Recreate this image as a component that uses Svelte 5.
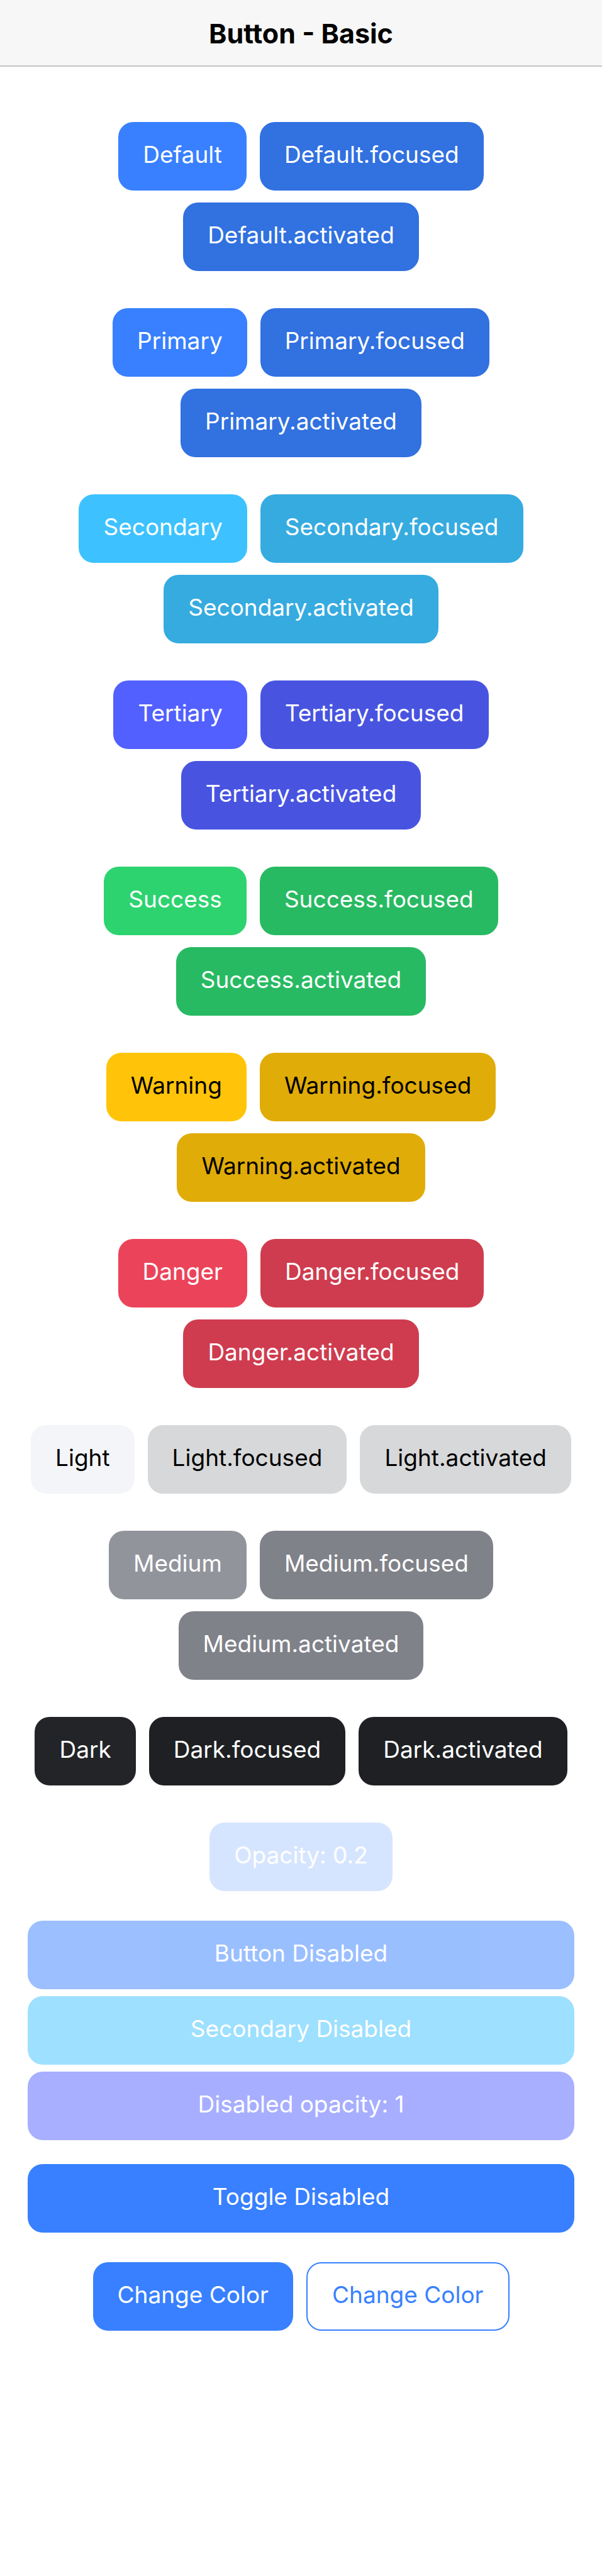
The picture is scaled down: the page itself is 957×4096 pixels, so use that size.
<script>
  const groups = ['Default', 'Primary', 'Secondary', 'Tertiary', 'Success', 'Warning', 'Danger', 'Light', 'Medium', 'Dark'];
  const palette = ['primary', 'secondary', 'tertiary', 'success', 'warning', 'danger', 'light', 'medium', 'dark'];

  let toggled = $state(false);
  let index = $state(0);

  function nextColor() {
    index = (index + 1) % palette.length;
  }
</script>

<div class="page">
  <header>
    <h1>Button - Basic</h1>
  </header>

  <main>
    {#each groups as name}
      {@const color = name === 'Default' ? 'primary' : name.toLowerCase()}
      <div class="group">
        <button type="button" class={color}>{name}</button>
        <button type="button" class="{color} shade">{name}.focused</button>
        <button type="button" class="{color} shade">{name}.activated</button>
      </div>
    {/each}

    <div class="group">
      <button type="button" class="primary faint">Opacity: 0.2</button>
    </div>

    <div class="stack">
      <button type="button" class="primary" disabled>Button Disabled</button>
      <button type="button" class="secondary" disabled>Secondary Disabled</button>
      <button type="button" class="tertiary" disabled>Disabled opacity: 1</button>
    </div>

    <div class="stack toggle">
      <button type="button" class="primary" aria-pressed={toggled} onclick={() => (toggled = !toggled)}>Toggle Disabled</button>
    </div>

    <div class="group">
      <button type="button" class={palette[index]} onclick={nextColor}>Change Color</button>
      <button type="button" class="{palette[index]} outline" onclick={nextColor}>Change Color</button>
    </div>
  </main>
</div>

<style>
  :global(body) {
    margin: 0;
    background: #fff;
  }

  .page {
    min-height: 100vh;
    font-family: Inter, "Liberation Sans", sans-serif;
    color: #000;
  }

  header {
    display: flex;
    align-items: center;
    justify-content: center;
    height: 104px;
    background: #f7f7f7;
    border-bottom: 2px solid #c4c4c4;
  }

  h1 {
    margin: 0;
    padding-top: 2px;
    font-size: 43px;
    line-height: 48px;
    font-weight: 700;
    font-optical-sizing: none;
  }

  main {
    padding: 88px 35px 48px;
  }

  .group {
    display: flex;
    flex-wrap: wrap;
    justify-content: center;
    gap: 19px 21px;
  }

  .group + .group {
    margin-top: 59px;
  }

  .stack {
    display: flex;
    flex-direction: column;
    gap: 11px;
    margin: 47px 9px;
  }

  .toggle {
    margin-top: -9px;
  }

  button {
    --base: #3880ff;
    --dark: #3171e0;
    --ink: #fff;
    box-sizing: border-box;
    min-height: 109px;
    margin: 0;
    padding: 0 39px 5px;
    border: 0;
    border-radius: 24px;
    background: var(--base);
    color: var(--ink);
    font-family: inherit;
    font-size: 37px;
    line-height: 46px;
    font-weight: 400;
    white-space: nowrap;
    cursor: pointer;
  }

  .secondary { --base: #3dc2ff; --dark: #36abe0; }
  .tertiary { --base: #5260ff; --dark: #4854e0; }
  .success { --base: #2dd36f; --dark: #28ba62; }
  .warning { --base: #ffc409; --dark: #e0ac08; --ink: #000; }
  .danger { --base: #eb445a; --dark: #cf3c4f; }
  .light { --base: #f4f5f8; --dark: #d7d8da; --ink: #000; }
  .medium { --base: #92949c; --dark: #808289; }
  .dark { --base: #222428; --dark: #1e2023; }

  .shade {
    background: var(--dark);
  }

  .faint {
    opacity: 0.2;
  }

  .outline {
    border: 2px solid var(--base);
    background: transparent;
    color: var(--base);
  }

  button:disabled {
    opacity: 0.5;
    cursor: default;
  }
</style>
